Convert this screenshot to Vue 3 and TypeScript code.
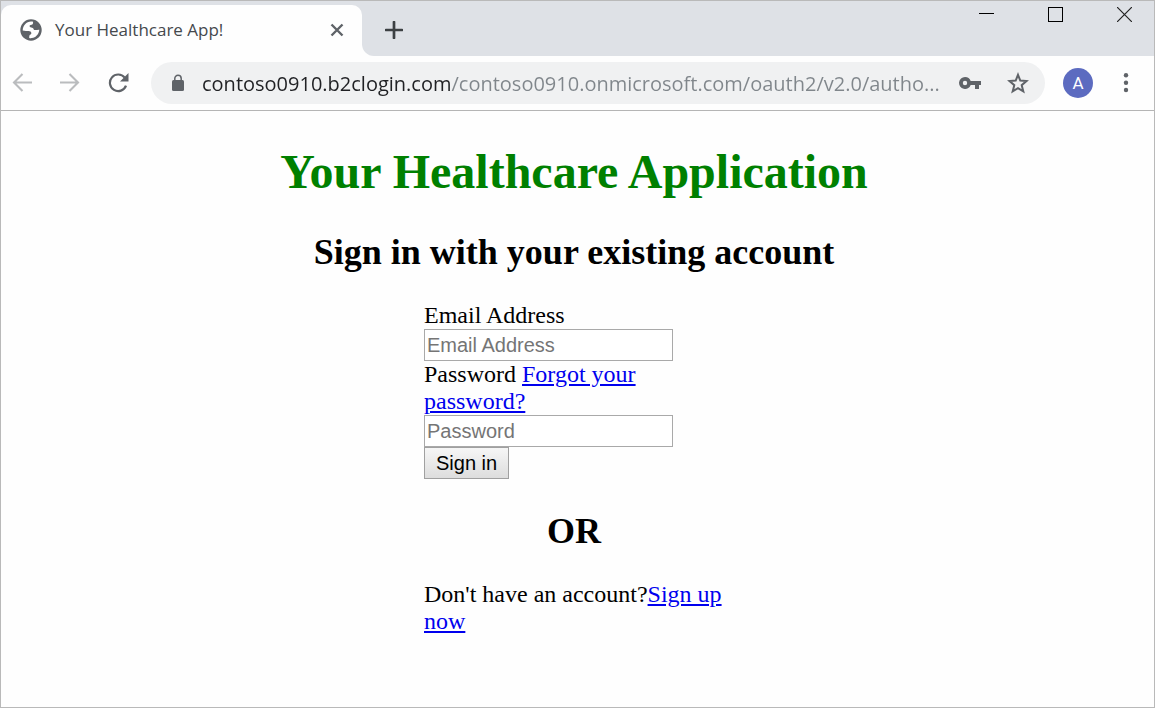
<script setup lang="ts">
import { ref } from 'vue'

const tabTitle = 'Your Healthcare App!'
const address = ref('contoso0910.b2clogin.com/contoso0910.onmicrosoft.com/oauth2/v2.0/autho...')
const email = ref('')
const password = ref('')
</script>

<template>
  <div class="window">
    <header class="tab-strip">
      <div class="tab-well">
        <div class="tab">
          <svg class="globe" viewBox="0 0 22 22" aria-hidden="true">
            <circle cx="11" cy="11" r="10.7" fill="#5f6368" />
            <path
              d="M13.100 2.700c-.1 1.300.1 2-.8 2.700-.8.600-2.500.300-2.700 1.400-.2.900.3 1.500 1.600 1.600 1.300.1 2 .5 2.300 1.500.3.900 1 1.300 2.100 1.200 1.300-.1 2-.4 3.700-.3-.3 4.300-3.500 7.900-7.500 8.300-1 .1-1.900 0-2.600-.2.100-1.500 0-2.400.8-3.100.7-.6 1.400-.8 1.300-1.900-.1-1.200-1.300-1.800-2.600-1.900-2 0-3.500-.3-6-.6.1-4.900 3.700-8.900 8.300-9 .8 0 1.500.1 2.100.3z"
              fill="#fff"
            />
          </svg>
          <span class="tab-title">{{ tabTitle }}</span>
          <button class="icon-button" type="button" aria-label="Close tab">
            <svg width="14" height="14" viewBox="0 0 14 14">
              <path d="M1.500 1.500l11 11M12.500 1.500l-11 11" stroke="#5f6368" stroke-width="2.400" />
            </svg>
          </button>
        </div>
      </div>
      <div class="strip-rest">
        <button class="icon-button new-tab" type="button" aria-label="New tab">
          <svg width="18" height="18" viewBox="0 0 18 18">
            <path d="M9 1v16M1 9h16" stroke="#3c4043" stroke-width="2.700" stroke-linecap="round" />
          </svg>
        </button>
        <div class="window-controls">
          <button class="icon-button" type="button" aria-label="Minimize">
            <svg width="15" height="15" viewBox="0 0 15 15"><path d="M0 6.500h15" stroke="#000" /></svg>
          </button>
          <button class="icon-button" type="button" aria-label="Maximize">
            <svg width="15" height="15" viewBox="0 0 15 15">
              <rect x=".5" y=".5" width="14" height="14" fill="none" stroke="#000" />
            </svg>
          </button>
          <button class="icon-button" type="button" aria-label="Close window">
            <svg width="15" height="15" viewBox="0 0 15 15">
              <path d="M0 0l15 15M15 0L0 15" stroke="#222" stroke-width="1.200" />
            </svg>
          </button>
        </div>
      </div>
    </header>

    <nav class="toolbar" aria-label="Browser toolbar">
      <div class="history">
        <button class="icon-button" type="button" aria-label="Back">
          <svg width="20" height="20" viewBox="0 0 20 20">
            <path d="M20 9.500H2M10.500 1L2 9.500l8.500 8.500" fill="none" stroke="#babcbe" stroke-width="2.100" />
          </svg>
        </button>
        <button class="icon-button" type="button" aria-label="Forward">
          <svg width="20" height="20" viewBox="0 0 20 20">
            <path d="M0 9.500h18M9.500 1l8.500 8.500L9.500 18" fill="none" stroke="#babcbe" stroke-width="2.100" />
          </svg>
        </button>
        <button class="icon-button" type="button" aria-label="Reload">
          <svg width="22" height="20" viewBox="0 0 22 20">
            <path d="M16.700 4.600A8.300 8.300 0 1 0 18 12.700" fill="none" stroke="#5f6368" stroke-width="2.200" />
            <path d="M20.500 0v8.500H12z" fill="#5f6368" />
          </svg>
        </button>
      </div>
      <div class="address-bar">
        <svg width="14" height="18" viewBox="0 0 14 18" aria-hidden="true">
          <path d="M3.800 7V4.500a3.200 3.200 0 0 1 6.400 0V7" fill="none" stroke="#5f6368" stroke-width="1.500" />
          <rect x="1" y="6" width="12" height="11" rx="1.500" fill="#5f6368" />
        </svg>
        <input v-model="address" class="address" type="text" aria-label="Address" spellcheck="false" />
        <button class="icon-button" type="button" aria-label="Saved passwords">
          <svg width="22" height="12" viewBox="0 0 22 12">
            <path
              d="M6 0a6 6 0 1 0 5.700 8H16v4h4V8h2V4H11.700A6 6 0 0 0 6 0zm0 3.800a2.200 2.200 0 1 1 0 4.400 2.200 2.200 0 0 1 0-4.400z"
              fill="#5f6368"
              fill-rule="evenodd"
            />
          </svg>
        </button>
        <button class="icon-button bookmark" type="button" aria-label="Bookmark this page">
          <svg width="22" height="22" viewBox="0 0 22 22">
            <path
              d="M11 2.800l2.300 5.800 6.200.500-4.800 4.100 1.600 6.200-5.300-3.300-5.300 3.300 1.600-6.200-4.800-4.100 6.200-.5z"
              fill="none"
              stroke="#5f6368"
              stroke-width="2"
            />
          </svg>
        </button>
      </div>
      <button class="avatar" type="button" aria-label="Profile A">A</button>
      <button class="icon-button" type="button" aria-label="Menu">
        <svg width="6" height="20" viewBox="0 0 6 20" fill="#5f6368">
          <circle cx="3" cy="2.300" r="2.200" />
          <circle cx="3" cy="9.700" r="2.200" />
          <circle cx="3" cy="17" r="2.200" />
        </svg>
      </button>
    </nav>

    <main class="page">
      <h1>Your Healthcare Application</h1>
      <h2>Sign in with your existing account</h2>
      <form class="column" @submit.prevent>
        <label for="email">Email Address</label>
        <input id="email" v-model="email" class="field" type="email" placeholder="Email Address" />
        <div>
          <label for="password">Password</label>
          {{ ' ' }}<a href="#forgot">Forgot your password?</a>
        </div>
        <input id="password" v-model="password" class="field" type="password" placeholder="Password" />
        <button class="submit" type="submit">Sign in</button>
      </form>
      <h2>OR</h2>
      <div class="column">Don't have an account?<a href="#signup">Sign up now</a></div>
    </main>
  </div>
</template>

<style>
body {
  background: #fefefe;
}
</style>

<style scoped>
.window {
  box-sizing: border-box;
  min-height: 100vh;
  border: 1px solid #b9b9b9;
  background: #fefefe;
  font-family: 'Open Sans', 'Noto Sans', sans-serif;
}

.icon-button {
  display: flex;
  align-items: center;
  justify-content: center;
  flex: none;
  padding: 0;
  border: 0;
  background: none;
}

.tab-strip {
  display: flex;
  height: 55px;
}

.tab-well {
  display: flex;
  flex: 0 1 361px;
  box-sizing: border-box;
  padding-top: 4px;
  background: #dee1e6;
}

.tab {
  display: flex;
  align-items: center;
  box-sizing: border-box;
  flex: 1;
  padding: 0 18px 2px 19px;
  border-radius: 10px 10px 0 0;
  background: #fefefe;
}

.globe {
  width: 22px;
  height: 22px;
  flex: none;
  margin-right: 13px;
}

.tab-title {
  flex: 1;
  color: #45494d;
  font-size: 17px;
  line-height: 24px;
  white-space: nowrap;
}

.strip-rest {
  display: flex;
  flex: 1;
  border-bottom-left-radius: 12px;
  background: #dee1e6;
}

.new-tab {
  width: 64px;
  padding-top: 2px;
}

.window-controls {
  display: flex;
  flex: 1;
  align-items: flex-start;
  justify-content: flex-end;
  gap: 54px;
  padding: 6px 22px 0 0;
}

.toolbar {
  display: flex;
  align-items: center;
  height: 54px;
  padding: 0 25px 0 11px;
  border-bottom: 1px solid #b5b5b5;
}

.history {
  display: flex;
  gap: 28px;
  margin-right: 21px;
}

.address-bar {
  display: flex;
  align-items: center;
  flex: 1;
  min-width: 0;
  height: 42px;
  padding: 0 16px 0 20px;
  border-radius: 21px;
  background: #f0f1f2;
}

.address {
  flex: 1;
  min-width: 0;
  height: 30px;
  margin: 0 16px 0 17px;
  padding: 0;
  border: 0;
  outline: 0;
  background: linear-gradient(90deg, #202124 249px, #80868b 249px);
  background-clip: text;
  color: transparent;
  font-family: inherit;
  font-size: 20px;
}

.bookmark {
  margin-left: 26px;
}

.avatar {
  width: 30px;
  height: 30px;
  margin: 0 30px 0 18px;
  padding: 0;
  border: 0;
  border-radius: 50%;
  background: #5c6bc0;
  color: #fff;
  font-family: Roboto, sans-serif;
  font-size: 17px;
}

.page {
  padding: 1px 7px 32px 0;
  color: #000;
  font-family: 'Liberation Serif', serif;
  font-size: 24px;
  line-height: 27px;
}

h1,
h2 {
  text-align: center;
  font-weight: bold;
}

h1 {
  margin: 32px 0;
  color: #008000;
  font-size: 48px;
  line-height: 55px;
}

h2 {
  margin: 31px 0 29px;
  font-size: 36px;
  line-height: 42px;
}

.column {
  width: 300px;
  margin: 0 auto;
}

.column a {
  color: #0000ee;
}

.field {
  display: block;
  box-sizing: border-box;
  width: 249px;
  height: 32px;
  padding: 2px;
  border: 1px solid #a9a9a9;
  background: #fff;
  font-family: 'Liberation Sans', sans-serif;
  font-size: 20px;
}

.field::placeholder {
  color: #757575;
}

.submit {
  display: block;
  height: 32px;
  padding: 0 11px;
  border: 1px solid #a0a0a0;
  background: linear-gradient(#f6f6f6, #dddddd);
  color: #000;
  font-family: 'Liberation Sans', sans-serif;
  font-size: 20px;
}
</style>
